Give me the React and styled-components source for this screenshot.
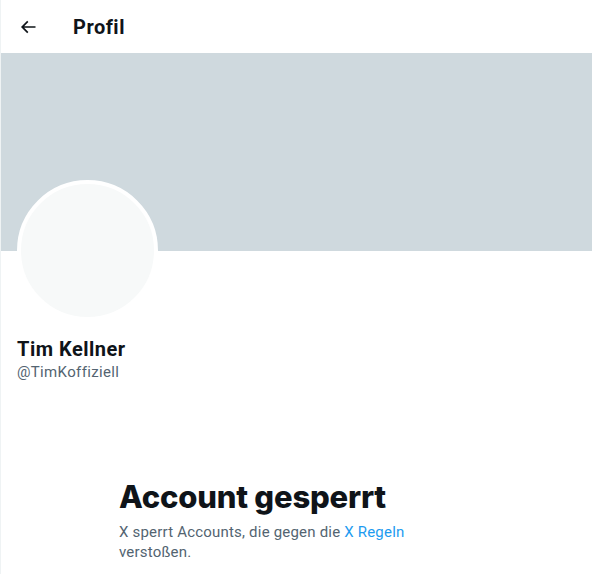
import React from "react";
import styled, { createGlobalStyle } from "styled-components";

const Global = createGlobalStyle`
  html, body { margin: 0; padding: 0; background: #ffffff; }
  body { font-family: Roboto, "Segoe UI", "Noto Sans", Arial, sans-serif; color: #0f1419; }
`;

const Column = styled.main`
  width: 591px;
  min-height: 574px;
  border-left: 1px solid #eff3f4;
  display: flex;
  flex-direction: column;
`;

const Header = styled.header`
  height: 53px;
  display: flex;
  align-items: center;
  padding: 0 16px;
  box-sizing: border-box;
  background: rgba(255, 255, 255, 0.85);
`;

const BackButton = styled.button`
  width: 20px;
  height: 20px;
  padding: 0;
  margin: 0 35px 0 1px;
  border: none;
  background: transparent;
  display: flex;
  align-items: center;
  justify-content: center;
  color: #0f1419;
  cursor: pointer;
  svg { width: 20px; height: 20px; fill: currentColor; }
`;

const Title = styled.h2`
  margin: 0;
  font-size: 20px;
  line-height: 24px;
  font-weight: 700;
  letter-spacing: 0.5px;
  color: #0f1419;
`;

const Banner = styled.div`
  height: 198px;
  background: #cfd9de;
`;

const ProfileInfo = styled.section`
  padding: 0 16px;
  display: flex;
  flex-direction: column;
`;

const Avatar = styled.div`
  width: 133px;
  height: 133px;
  margin-top: -71px;
  border: 4px solid #ffffff;
  border-radius: 50%;
  background: #f7f9f9;
`;

const Name = styled.div`
  margin-top: 16px;
  font-size: 20px;
  line-height: 24px;
  font-weight: 700;
  letter-spacing: 0.5px;
  color: #0f1419;
`;

const Handle = styled.div`
  margin-top: 1px;
  font-size: 15px;
  line-height: 20px;
  letter-spacing: 0.35px;
  color: #536471;
`;

const EmptyState = styled.section`
  margin-top: 97px;
  padding-left: 118px;
  max-width: 300px;
`;

const Headline = styled.h1`
  margin: 0 0 7px;
  font-family: Inter, "Noto Sans", sans-serif;
  font-size: 31px;
  line-height: 36px;
  font-weight: 800;
  letter-spacing: -0.2px;
  color: #0f1419;
`;

const Body = styled.p`
  margin: 0;
  font-size: 15px;
  line-height: 20px;
  letter-spacing: 0.2px;
  color: #536471;
`;

const Link = styled.a`
  color: #1d9bf0;
  text-decoration: none;
`;

export default function App() {
  return (
    <>
      <Global />
      <Column>
        <Header>
          <BackButton aria-label="Zurück">
            <svg viewBox="0 0 24 24">
              <path d="M7.414 13l5.043 5.04-1.414 1.42L3.586 12l7.457-7.46 1.414 1.42L7.414 11H21v2H7.414z" />
            </svg>
          </BackButton>
          <Title>Profil</Title>
        </Header>
        <Banner />
        <ProfileInfo>
          <Avatar />
          <Name>Tim Kellner</Name>
          <Handle>@TimKoffiziell</Handle>
        </ProfileInfo>
        <EmptyState>
          <Headline>Account gesperrt</Headline>
          <Body>
            X sperrt Accounts, die gegen die <Link href="#">X Regeln</Link> verstoßen.
          </Body>
        </EmptyState>
      </Column>
    </>
  );
}
